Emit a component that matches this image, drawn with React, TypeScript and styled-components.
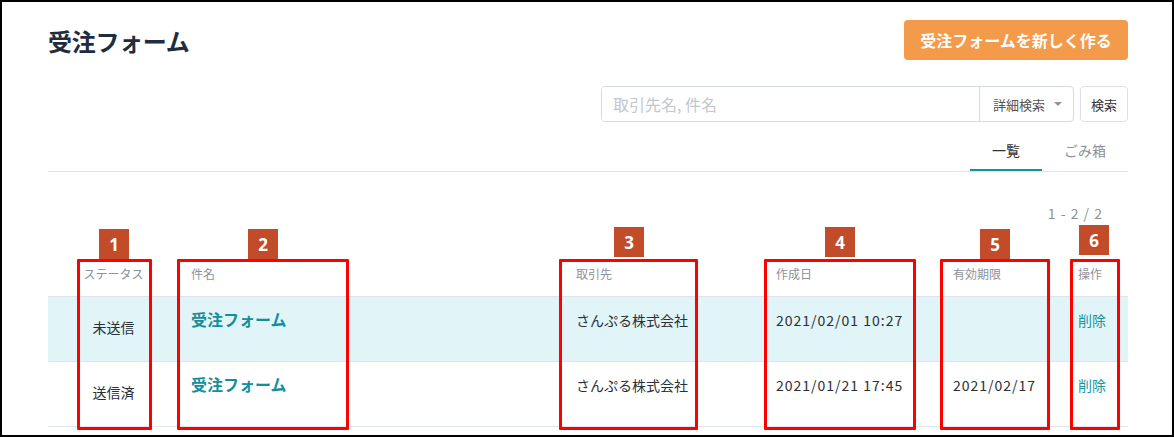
import * as React from 'react';
import styled, { createGlobalStyle } from 'styled-components';

const GlobalStyle = createGlobalStyle`
	body {
		margin: 0;
		background: #fff;
		font-family: "Noto Sans CJK JP", "Noto Sans", "Liberation Sans", sans-serif;
		color: #303133;
	}
	* {
		box-sizing: border-box;
	}
`;

type Row = {
	status: string;
	name: string;
	client: string;
	created: string;
	expires: string;
	highlight?: boolean;
};

const rows: Row[] = [
	{ status: '未送信', name: '受注フォーム', client: 'さんぷる株式会社', created: '2021/02/01 10:27', expires: '', highlight: true },
	{ status: '送信済', name: '受注フォーム', client: 'さんぷる株式会社', created: '2021/01/21 17:45', expires: '2021/02/17' },
];

// column widths, table is 1080px wide
const cols = [131, 385, 200, 177, 125, 62];

const marks = [
	{ n: 1, left: 75, width: 75, label: 97, labelTop: 227 },
	{ n: 2, left: 175, width: 172, label: 246, labelTop: 227 },
	{ n: 3, left: 557, width: 139, label: 612, labelTop: 225 },
	{ n: 4, left: 762, width: 152, label: 823, labelTop: 225 },
	{ n: 5, left: 938, width: 110, label: 978, labelTop: 227 },
	{ n: 6, left: 1068, width: 50, label: 1077, labelTop: 223 },
];

export default function App() {
	return (
		<>
			<GlobalStyle />
			<Frame>
				<Page>
					<Header>
						<Title>受注フォーム</Title>
						<CreateButton type="button">受注フォームを新しく作る</CreateButton>
					</Header>

					<SearchRow>
						<SearchGroup>
							<SearchInput placeholder="取引先名, 件名" />
							<DetailSelect>
								詳細検索
								<Caret />
							</DetailSelect>
						</SearchGroup>
						<SearchButton type="button">検索</SearchButton>
					</SearchRow>

					<Tabs>
						<Tab active>一覧</Tab>
						<Tab>ごみ箱</Tab>
					</Tabs>

					<Pagination>1 - 2 / 2</Pagination>

					<Table>
						<HeadRow>
							<HeadCell center>ステータス</HeadCell>
							<HeadCell>件名</HeadCell>
							<HeadCell>取引先</HeadCell>
							<HeadCell>作成日</HeadCell>
							<HeadCell>有効期限</HeadCell>
							<HeadCell>操作</HeadCell>
						</HeadRow>
						{rows.map((row, i) => (
							<BodyRow key={i} highlight={row.highlight}>
								<StatusCell>{row.status}</StatusCell>
								<Cell><NameLink href="#">{row.name}</NameLink></Cell>
								<Cell>{row.client}</Cell>
								<DateCell>{row.created}</DateCell>
								<DateCell>{row.expires}</DateCell>
								<Cell><DeleteLink href="#">削除</DeleteLink></Cell>
							</BodyRow>
						))}
					</Table>
				</Page>

				{marks.map((m) => (
					<React.Fragment key={m.n}>
						<MarkLabel style={{ left: m.label, top: m.labelTop }}>{m.n}</MarkLabel>
						<MarkBox style={{ left: m.left, width: m.width }} />
					</React.Fragment>
				))}
			</Frame>
		</>
	);
}

const Frame = styled.div`
	position: relative;
	width: 1174px;
	height: 437px;
	border: 2px solid #000;
	overflow: hidden;
	background: #fff;
`;
const Page = styled.div`
	padding: 18px 44px 0 46px;
`;
const Header = styled.div`
	display: flex;
	align-items: center;
	justify-content: space-between;
	height: 40px;
`;
const Title = styled.h1`
	margin: 0;
	font-size: 24px;
	font-weight: 600;
	color: #1f2d3d;
	letter-spacing: -0.3px;
`;
const CreateButton = styled.button`
	height: 40px;
	width: 224px;
	border: 0;
	border-radius: 4px;
	background: #f39a4b;
	color: #fff;
	font-family: inherit;
	font-size: 16px;
	font-weight: 700;
	cursor: pointer;
`;
const SearchRow = styled.div`
	display: flex;
	justify-content: flex-end;
	gap: 6px;
	margin-top: 26px;
	height: 36px;
`;
const SearchGroup = styled.div`
	display: flex;
	width: 473px;
	border: 1px solid #d6dae2;
	border-radius: 4px;
	overflow: hidden;
`;
const SearchInput = styled.input`
	flex: 1;
	border: 0;
	outline: none;
	padding: 0 11px;
	font-family: inherit;
	font-size: 16px;
	color: #303133;
	&::placeholder {
		color: #c3c7cf;
	}
`;
const DetailSelect = styled.div`
	display: flex;
	align-items: center;
	width: 94px;
	padding-left: 13px;
	border-left: 1px solid #d6dae2;
	font-size: 13px;
	color: #555;
`;
const Caret = styled.span`
	margin-left: 9px;
	width: 0;
	height: 0;
	border-left: 4px solid transparent;
	border-right: 4px solid transparent;
	border-top: 4px solid #8f939a;
`;
const SearchButton = styled.button`
	width: 48px;
	border: 1px solid #dcdfe6;
	border-radius: 4px;
	background: #fff;
	font-family: inherit;
	font-size: 13px;
	color: #333;
	padding: 0;
`;
const Tabs = styled.div`
	display: flex;
	justify-content: flex-end;
	margin-top: 10px;
	border-bottom: 1px solid #e1e4ea;
`;
const Tab = styled.div<{ active?: boolean }>`
	height: 39px;
	line-height: 37px;
	padding: 0 22px;
	font-size: 14px;
	color: ${(p) => (p.active ? '#303133' : '#8d9299')};
	border-bottom: 2px solid ${(p) => (p.active ? '#13939e' : 'transparent')};
`;
const Pagination = styled.div`
	margin-top: 31px;
	padding-right: 25px;
	text-align: right;
	font-size: 14px;
	line-height: 20px;
	color: #8d9299;
	letter-spacing: 1px;
`;
const Table = styled.div`
	margin-top: 29px;
	width: 1080px;
`;
const gridCols = cols.map((c) => `${c}px`).join(' ');
const HeadRow = styled.div`
	display: grid;
	grid-template-columns: ${gridCols};
	height: 45px;
	align-items: center;
	border-bottom: 1px solid #dfe3ea;
`;
const HeadCell = styled.div<{ center?: boolean }>`
	padding: 0 12px;
	font-size: 12px;
	color: #8d9299;
	text-align: ${(p) => (p.center ? 'center' : 'left')};
	margin-top: -2px;
`;
const BodyRow = styled.div<{ highlight?: boolean }>`
	display: grid;
	grid-template-columns: ${gridCols};
	height: 65px;
	background: ${(p) => (p.highlight ? '#e1f5f8' : '#fff')};
	border-bottom: 1px solid #dfe3ea;
`;
const Cell = styled.div`
	padding: 13px 12px 0;
	font-size: 14px;
	line-height: 20px;
	color: #2b2f36;
`;
const DateCell = styled(Cell)`
	letter-spacing: 1px;
`;
const StatusCell = styled(Cell)`
	padding-top: 20px;
	text-align: center;
`;
const NameLink = styled.a`
	font-size: 16px;
	font-weight: 700;
	color: #138f9b;
	text-decoration: none;
	line-height: 20px;
	position: relative;
	top: -1px;
`;
const DeleteLink = styled.a`
	color: #1a96a2;
	text-decoration: none;
`;
const MarkBox = styled.div`
	position: absolute;
	top: 257px;
	height: 171px;
	border: 3px solid #ff0000;
	border-radius: 1px;
`;
const MarkLabel = styled.div`
	position: absolute;
	width: 30px;
	height: 30px;
	background: #c24b29;
	color: #fff;
	font-family: "Open Sans", "Liberation Sans", sans-serif;
	font-size: 17px;
	font-weight: 700;
	display: flex;
	align-items: center;
	justify-content: center;
`;
